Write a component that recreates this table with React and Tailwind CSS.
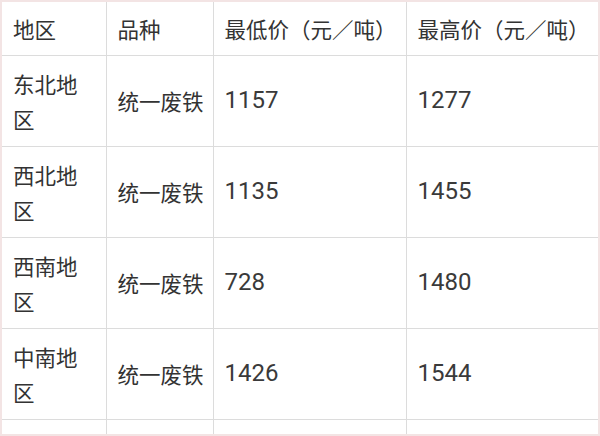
import React from 'react'

const rows = [
  { region: '东北地区', kind: '统一废铁', low: '1157', high: '1277' },
  { region: '西北地区', kind: '统一废铁', low: '1135', high: '1455' },
  { region: '西南地区', kind: '统一废铁', low: '728', high: '1480' },
  { region: '中南地区', kind: '统一废铁', low: '1426', high: '1544' },
  { region: '', kind: '', low: '', high: '' },
]

const cell = 'border-r border-b border-[#dcdcdc] px-[11px] align-middle text-left font-normal'
const num = `${cell} font-['Roboto',sans-serif] text-[24px] text-[#3a3a3a]`

export default function App() {
  return (
    <div
      className="w-[600px] h-[436px] overflow-hidden bg-white border-2 border-[#f3e4e4] text-[#333] text-[21.5px] leading-[35px]"
      style={{ fontFamily: '"Noto Sans CJK SC", "Noto Sans", sans-serif' }}
    >
      <table className="table-fixed border-collapse w-[596px]">
        <colgroup>
          <col className="w-[104px]" />
          <col className="w-[107px]" />
          <col className="w-[193px]" />
          <col className="w-[192px]" />
        </colgroup>
        <thead>
          <tr className="h-[53px]">
            <th className={cell}>地区</th>
            <th className={cell}>品种</th>
            <th className={cell}>最低价（元／吨）</th>
            <th className={cell}>最高价（元／吨）</th>
          </tr>
        </thead>
        <tbody>
          {rows.map((r, i) => (
            <tr key={i} className="h-[91px]">
              <td className={cell}>{r.region}</td>
              <td className={`${cell} whitespace-nowrap`}>{r.kind}</td>
              <td className={num}>{r.low}</td>
              <td className={num}>{r.high}</td>
            </tr>
          ))}
        </tbody>
      </table>
    </div>
  )
}
